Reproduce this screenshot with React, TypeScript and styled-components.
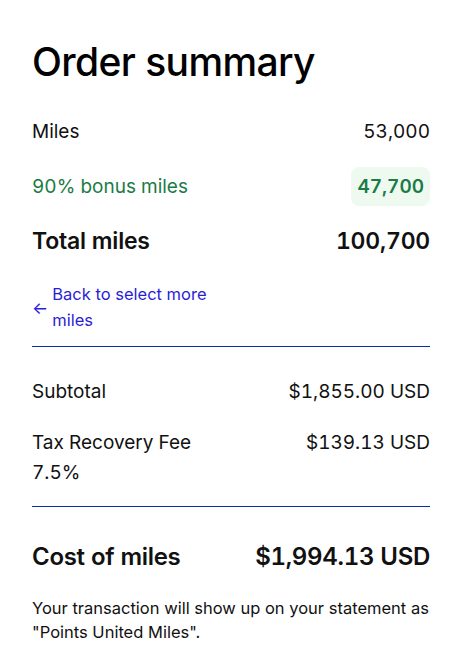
import styled, { createGlobalStyle } from "styled-components";

const GlobalStyle = createGlobalStyle`
  html, body {
    margin: 0;
    padding: 0;
    background: #ffffff;
  }
  body {
    font-family: Inter, "Open Sans", "Liberation Sans", sans-serif;
    color: #111111;
  }
`;

const Summary = styled.section`
  width: 398px;
  padding: 35px 46px 20px 32px;
`;

const Title = styled.h1`
  margin: 0 0 28px;
  font-size: 39px;
  line-height: 54px;
  font-weight: 500;
  letter-spacing: -0.6px;
  color: #000;
`;

const Row = styled.div<{ $bold?: boolean; $green?: boolean; $top?: boolean }>`
  display: flex;
  justify-content: space-between;
  align-items: ${(p) => (p.$top ? "flex-start" : "center")};
  gap: 24px;
  font-size: ${(p) => (p.$bold ? "23px" : "19px")};
  line-height: 30px;
  font-weight: ${(p) => (p.$bold ? 600 : 400)};
  letter-spacing: ${(p) => (p.$bold ? "-0.2px" : "0")};
  font-variant-numeric: tabular-nums;
  color: ${(p) => (p.$green ? "#1b7b45" : "#111")};
`;

const Badge = styled.span`
  background: #eefaf0;
  border-radius: 8px;
  padding: 4px 6px;
  font-weight: 600;
  line-height: 31px;
`;

const MilesList = styled.div`
  display: flex;
  flex-direction: column;
  gap: 24px;
`;

const BonusRow = styled(Row)`
  margin: -4px 0;
`;

const BackLink = styled.a`
  display: flex;
  align-items: center;
  gap: 4px;
  margin-top: 25px;
  width: 190px;
  color: #2b1ed6;
  font-size: 16.5px;
  line-height: 26px;
  text-decoration: none;
  cursor: pointer;
`;

const Arrow = styled.span`
  font-size: 17px;
  line-height: 1;
  flex-shrink: 0;
  padding-top: 2px;
`;

const Spacer = styled.div`
  height: 13px;
`;

const Divider = styled.hr`
  margin: 0;
  border: 0;
  border-top: 1.5px solid #0033a0;
`;

const PriceBlock = styled.div`
  display: flex;
  flex-direction: column;
  gap: 21px;
  padding: 30px 0 18px;
`;

const FeeLabel = styled.span`
  width: 170px;
`;

const Total = styled(Row)`
  font-size: 24px;
  letter-spacing: -0.3px;
  margin: 35px 0 24px;
`;

const Note = styled.p`
  margin: 0;
  font-size: 16.5px;
  line-height: 24px;
  color: #111;
`;

export default function App() {
  return (
    <>
      <GlobalStyle />
      <Summary>
        <Title>Order summary</Title>
        <MilesList>
          <Row>
            <span>Miles</span>
            <span>53,000</span>
          </Row>
          <BonusRow $green>
            <span>90% bonus miles</span>
            <Badge>47,700</Badge>
          </BonusRow>
          <Row $bold>
            <span>Total miles</span>
            <span>100,700</span>
          </Row>
        </MilesList>
        <BackLink>
          <Arrow>←</Arrow>
          <span>Back to select more miles</span>
        </BackLink>
        <Spacer />
        <Divider />
        <PriceBlock>
          <Row>
            <span>Subtotal</span>
            <span>$1,855.00 USD</span>
          </Row>
          <Row $top>
            <FeeLabel>Tax Recovery Fee 7.5%</FeeLabel>
            <span>$139.13 USD</span>
          </Row>
        </PriceBlock>
        <Divider />
        <Total $bold>
          <span>Cost of miles</span>
          <span>$1,994.13 USD</span>
        </Total>
        <Note>
          Your transaction will show up on your statement as "Points United
          Miles".
        </Note>
      </Summary>
    </>
  );
}
